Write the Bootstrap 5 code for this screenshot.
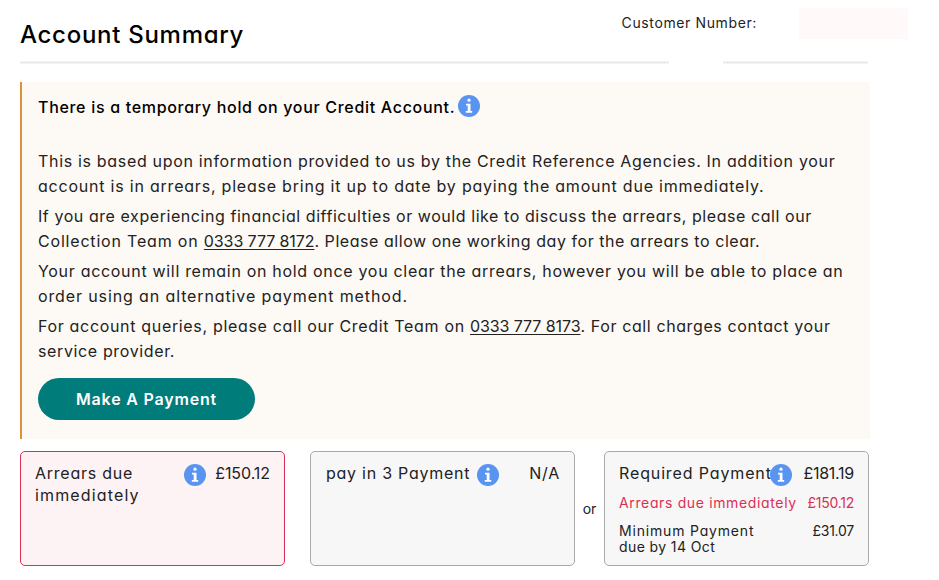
<!DOCTYPE html>
<html lang="en">
<head>
<meta charset="utf-8">
<meta name="viewport" content="width=device-width, initial-scale=1">
<title>Account Summary</title>
<link href="https://cdn.jsdelivr.net/npm/bootstrap@5.3.0/dist/css/bootstrap.min.css" rel="stylesheet">
<style>
body{font-family:"Inter","Liberation Sans",sans-serif;font-feature-settings:"cv11";font-size:16px;color:#222;background:#fff;overflow:hidden}
.page{padding-left:20px;width:939px}
.page-head{height:61px}
.page-title{font-size:24px;font-weight:500;line-height:30px;letter-spacing:.72px;color:#000;padding-top:20px}
.cust-label{font-size:14px;line-height:20px;letter-spacing:.62px;margin:13px 42px 0 0}
.cust-value{width:109px;height:31px;margin:8px 31px 0 0;background:#fff9f9}
.rule{height:3px;background:#e8e8e8;border-top:1px solid #f4f4f4;border-bottom:1px solid #f4f4f4}
.rule-a{width:649px}
.rule-b{width:145px;margin-left:54px}
.hold{width:850px;height:357px;margin-top:18px;padding:13px 0 0 16px;background:#fdf9f5;border-left:2px solid #dc933c}
.hold-title{font-size:16px;font-weight:500;line-height:25px;letter-spacing:.69px;color:#000;height:25px;margin-bottom:29px}
.hold-title .info{margin-left:3px}
.hold p{line-height:25px;margin-bottom:5px;white-space:nowrap}
.hold p .ln{display:block}
.hold a{color:#222;letter-spacing:-.09px;text-underline-offset:2px;text-decoration-thickness:1px}
.info{width:22px;height:22px;flex:none;display:block}
.l1{letter-spacing:.675px}.l2{letter-spacing:.785px}.l3{letter-spacing:.565px}.l4{letter-spacing:.81px}.l4b{letter-spacing:.55px}
.l5{letter-spacing:.69px}.l6{letter-spacing:.88px}.l7{letter-spacing:.67px}.l7b{letter-spacing:.61px}.l8{letter-spacing:.63px}
.btn-pay{width:217px;height:42px;margin-top:9px;background:#007c7b;color:#fff;font-weight:600;letter-spacing:.8px;line-height:24px;padding:0 0 1px}
.btn-pay:hover{background:#006b6a;color:#fff}
.tiles{margin-top:12px}
.tile{width:265px;height:115px;border:1px solid #a9a9a9;border-radius:5px;background:#f7f7f7;padding:10px 14px 0}
.tile-due{border-color:#dc2f55;background:#fdf2f4}
.tile-pay{margin-left:25px;padding-left:15px}
.tile-row{line-height:22px;letter-spacing:.75px;height:22px}
.tile-row .info{margin-top:2px}
.tile-due .info{margin-right:9px}
.tile-pay .info{margin-left:7px}
.wide{letter-spacing:1.15px}
.required .tile-row{letter-spacing:.87px}
.required .info{margin-left:-2px}
.amount{letter-spacing:-.05px}
.required .amount{letter-spacing:-.25px}
.small-row{font-size:14px;line-height:16px;letter-spacing:.64px;margin-top:12px}
.small-row.red{margin-top:11px;color:#dc2f55}
.min-label{letter-spacing:.82px}
.due-label{letter-spacing:.4px}
.or{width:29px;font-size:14px;line-height:20px}
</style>
</head>
<body>
<svg class="d-none" xmlns="http://www.w3.org/2000/svg"><symbol id="info" viewBox="0 0 22 22"><circle cx="11" cy="11" r="11" fill="#5894f0"/><circle cx="11" cy="5.2" r="1.6" fill="#fff"/><path fill="#fff" d="M8 8.7h4.5v7.2h1.7v1.8H7.8v-1.8h1.9v-5.3H8z"/></symbol></svg>
<main class="page">
  <header class="page-head d-flex justify-content-between align-items-start">
    <h1 class="page-title m-0">Account Summary</h1>
    <div class="d-flex align-items-start">
      <div class="cust-label">Customer Number:</div>
      <div class="cust-value"></div>
    </div>
  </header>
  <div class="d-flex"><div class="rule rule-a"></div><div class="rule rule-b"></div></div>
  <section class="hold">
    <h2 class="hold-title d-flex">There is a temporary hold on your Credit Account.<svg class="info"><use href="#info"/></svg></h2>
    <p><span class="ln l1">This is based upon information provided to us by the Credit Reference Agencies. In addition your</span>
    <span class="ln l2">account is in arrears, please bring it up to date by paying the amount due immediately.</span></p>
    <p><span class="ln l3">If you are experiencing financial difficulties or would like to discuss the arrears, please call our</span>
    <span class="ln l4">Collection Team on <a href="#">0333 777 8172</a><span class="l4b">. Please allow one working day for the arrears to clear.</span></span></p>
    <p><span class="ln l5">Your account will remain on hold once you clear the arrears, however you will be able to place an</span>
    <span class="ln l6">order using an alternative payment method.</span></p>
    <p><span class="ln l7">For account queries, please call our Credit Team on <a href="#">0333 777 8173</a><span class="l7b">. For call charges contact your</span></span>
    <span class="ln l8">service provider.</span></p>
    <button class="btn btn-pay rounded-pill border-0" type="button">Make A Payment</button>
  </section>
  <section class="tiles d-flex">
    <div class="tile tile-due">
      <div class="tile-row d-flex">
        <div class="me-auto">Arrears due<br><span class="wide">immediately</span></div>
        <svg class="info"><use href="#info"/></svg>
        <div class="amount">£150.12</div>
      </div>
    </div>
    <div class="tile tile-pay">
      <div class="tile-row d-flex">
        <div>pay in 3 Payment</div>
        <svg class="info"><use href="#info"/></svg>
        <div class="ms-auto">N/A</div>
      </div>
    </div>
    <div class="or text-center align-self-center">or</div>
    <div class="tile required">
      <div class="tile-row d-flex">
        <div>Required Payment</div>
        <svg class="info"><use href="#info"/></svg>
        <div class="amount ms-auto">£181.19</div>
      </div>
      <div class="small-row red d-flex justify-content-between"><div>Arrears due immediately</div><div class="amount">£150.12</div></div>
      <div class="small-row d-flex justify-content-between"><div><span class="min-label">Minimum Payment</span><br><span class="due-label">due by 14 Oct</span></div><div class="amount">£31.07</div></div>
    </div>
  </section>
</main>
<script src="https://cdn.jsdelivr.net/npm/bootstrap@5.3.0/dist/js/bootstrap.bundle.min.js"></script>
</body>
</html>
